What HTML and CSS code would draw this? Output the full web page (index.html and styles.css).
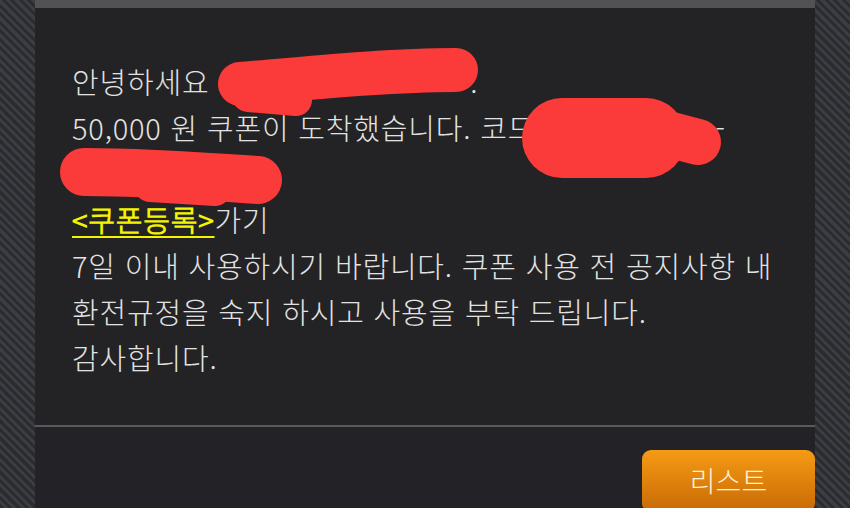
FILE: index.html
```html
<!DOCTYPE html>
<html lang="ko">
<head>
    <meta charset="UTF-8">
    <meta name="viewport" content="width=device-width, initial-scale=1.0">
    <title>쿠폰 도착</title>
    <link rel="stylesheet" href="styles.css">
</head>
<body>
    <div class="page">
        <div class="topbar"></div>

        <div class="message">
            <p>안녕하세요 <span class="hidden w1"></span>.</p>
            <p>50,000 원 쿠폰이 도착했습니다. 코드<span class="hidden w2"></span>-</p>
            <p><span class="hidden w3"></span></p>
            <p><a class="coupon-link" href="#">&lt;쿠폰등록&gt;</a>가기</p>
            <p>7일 이내 사용하시기 바랍니다. 쿠폰 사용 전 공지사항 내</p>
            <p>환전규정을 숙지 하시고 사용을 부탁 드립니다.</p>
            <p>감사합니다.</p>
        </div>

        <div class="divider"></div>

        <div class="actions">
            <button class="list-btn">리스트</button>
        </div>
    </div>

    <!-- red marker scribbles over the coupon code -->
    <svg class="scribbles" width="850" height="508" viewBox="0 0 850 508">
        <g stroke="#fb3a3a" stroke-linecap="round" stroke-linejoin="round" fill="none">
            <path d="M240 84 C310 78 390 70 456 70" stroke-width="44"/>
            <path d="M248 96 L296 100" stroke-width="32"/>
            <path d="M562 138 L646 138" stroke-width="80"/>
            <path d="M660 132 L698 142" stroke-width="46"/>
            <path d="M84 172 C140 172 200 176 258 180" stroke-width="48"/>
            <path d="M150 186 L215 190" stroke-width="32"/>
        </g>
    </svg>
</body>
</html>
```

FILE: styles.css
```css
body {
    margin: 0;
    padding: 0;
    height: 508px;
    overflow: hidden;
    font-family: "Noto Sans CJK KR", "Noto Sans", sans-serif;
    background: repeating-linear-gradient(45deg, #2b2c30 0, #2b2c30 3px, #3c3d42 3px, #3c3d42 6px);
}
.page { margin: 0 35px; width: 780px; height: 508px; background: #232325; }
.topbar { height: 8px; background: #525254; }
.message { padding: 50px 37px 0; height: 417px; box-sizing: border-box; color: #e2e2e2; font-family: "Noto Sans CJK KR Light", "Noto Sans CJK KR", sans-serif; font-size: 29px; font-weight: 300; letter-spacing: 0.8px; line-height: 46px; }
.message p { margin: 0; height: 46px; white-space: nowrap; }
.hidden { display: inline-block; vertical-align: middle; height: 10px; }
.w1 { width: 252px; }
.w2 { width: 180px; }
.w3 { width: 200px; }
.coupon-link { color: #f4f400; font-weight: 700; text-decoration: underline; text-decoration-thickness: 2px; text-underline-offset: 4px; }
.divider { height: 2px; background: #5b595e; }
.actions { display: flex; justify-content: flex-end; padding-top: 23px; background: #232226; height: 58px; }
.list-btn { width: 173px; height: 62px; border: none; border-radius: 9px; background: linear-gradient(#f59b14, #c86a06); color: #fff3d6; font-family: "Noto Sans CJK KR Light", "Noto Sans CJK KR", sans-serif; font-size: 28px; font-weight: 300; padding: 0 0 2px; cursor: pointer; }
.scribbles { position: absolute; left: 0; top: 0; }
```
